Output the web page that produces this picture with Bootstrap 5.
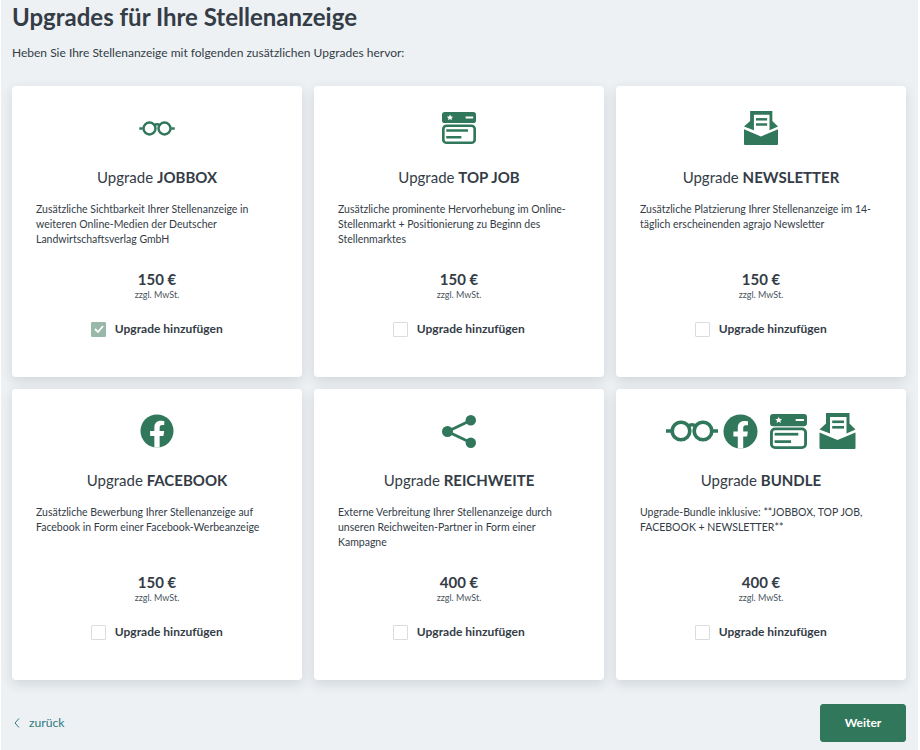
<!DOCTYPE html>
<html lang="de">
<head>
<meta charset="utf-8">
<title>Upgrades</title>
<link href="https://cdn.jsdelivr.net/npm/bootstrap@5.3.0/dist/css/bootstrap.min.css" rel="stylesheet">
<style>
html,body{height:100%;background:#fff;}
body{font-family:"Lato","Liberation Sans",sans-serif;color:#343c46;overflow:hidden;}
.stage{width:917px;height:750px;margin-left:1px;background:#edf1f4;padding:0 11px 0 11px;}
.page-title{font-size:24px;font-weight:700;line-height:30px;margin:0;padding-top:2px;color:#343c46;}
.page-sub{font-size:12px;line-height:18px;margin:0;padding-top:12px;height:54px;}
.tile-grid{display:grid;grid-template-columns:repeat(3,290px);grid-auto-rows:291px;gap:12px;}
.tile{background:#fff;border:0;border-radius:4px;box-shadow:0 4px 12px rgba(40,50,60,.14);padding:0 23px;text-align:center;display:flex;flex-direction:column;}
.icon-zone{height:64px;display:flex;align-items:center;justify-content:center;margin-top:10px;}
.icon-zone.many{gap:12px;}
.icon-zone.many .specs{margin-right:-7px;}
.tile-name{font-size:15px;font-weight:400;line-height:20px;margin:7px 0 0;height:35px;}
.tile-name b{font-weight:700;}
.tile-desc{font-size:10.5px;line-height:15px;text-align:left;margin:0 -1px 0 1px;height:68px;}
.tile-price{font-size:15px;font-weight:700;line-height:18px;margin:0;}
.tile-tax{font-size:9px;line-height:12px;margin:1px 0 20px;font-weight:400;color:#4b5560;}
.pick{display:flex;align-items:center;justify-content:center;gap:8.500px;font-size:12px;font-weight:700;line-height:16px;}
.tick{width:15px;height:15px;border:1px solid #d9dde1;border-radius:1px;background:#fff;display:flex;align-items:center;justify-content:center;}
.tick.on{background:#98b9aa;border-color:#98b9aa;}
.foot-bar{display:flex;justify-content:space-between;align-items:center;margin-top:24px;width:894px;}
.back-link{font-size:12.2px;color:#2f7a80;text-decoration:none;display:flex;align-items:center;gap:9px;padding-left:2px;}
.next-btn{background:#31775b;border-color:#31775b;color:#fff;font-size:12px;font-weight:700;width:86px;height:38px;border-radius:3px;padding:0;}
.next-btn:hover{background:#31775b;border-color:#31775b;}
svg{display:block;fill:#31775b;}
</style>
</head>
<body>
<svg width="0" height="0" style="position:absolute">
<defs>
<symbol id="i-glasses" viewBox="0 0 52 22"><g fill="none" stroke="#31775b" stroke-width="3.6"><circle cx="15" cy="11" r="8.800"/><circle cx="37" cy="11" r="8.800"/><path d="M22 6q4-2.500 8 0M0 11h5M47 11h5"/></g></symbol>
<symbol id="i-fb" viewBox="0 0 36 36"><circle cx="18" cy="18" r="17.500"/><path fill="#fff" d="M15.200 35.500V23.200h-4.500V18h4.500v-3.900c0-4.500 2.700-7 6.800-7 1.900 0 3.700.3 3.700.3v4.200h-2.100c-2.100 0-2.800 1.300-2.800 2.700V18h4.800l-.8 5.200h-4v12.300z"/></symbol>
<symbol id="i-card" viewBox="0 0 36 36" preserveAspectRatio="none"><path fill-rule="evenodd" d="M3 0h30a3 3 0 0 1 3 3v6.500a3 3 0 0 1-3 3H3a3 3 0 0 1-3-3V3a3 3 0 0 1 3-3zm5.500 2.800-1 2.300-2.400.2 1.800 1.600-.5 2.400 2.100-1.300 2.100 1.300-.5-2.400 1.800-1.600-2.400-.2zM25 5.200v2.100h8V5.200z"/><rect x="1.400" y="15.400" width="33.200" height="19.200" rx="3.500" fill="none" stroke="#31775b" stroke-width="2.800"/><rect x="4.500" y="19.400" width="23" height="2.800"/><rect x="4.500" y="27" width="16" height="2.800"/></symbol>
<symbol id="i-mail" viewBox="0 0 36 36"><path d="M6.500 0H30V10.500L36 16.500 27 20.500V4H10.500V20.500L0 16.500 6.500 10.500Z"/><path d="M0 19.400 18 27 36 19.400V35a1 1 0 0 1-1 1H1a1 1 0 0 1-1-1Z"/><rect x="12.700" y="7.500" width="11.800" height="2.600"/><rect x="12.700" y="13" width="11.800" height="2.600"/></symbol>
<symbol id="i-share" viewBox="0 0 34 33"><path fill="none" stroke="#31775b" stroke-width="3" d="M5.500 16.500 28.500 5.500M5.500 16.500l23 11"/><circle cx="5.500" cy="16.500" r="5.500"/><circle cx="28.800" cy="5.200" r="5.200"/><circle cx="28.800" cy="27.800" r="5.200"/></symbol>
</defs>
</svg>
<div class="stage">
<h1 class="page-title">Upgrades für Ihre Stellenanzeige</h1>
<p class="page-sub">Heben Sie Ihre Stellenanzeige mit folgenden zusätzlichen Upgrades hervor:</p>
<div class="tile-grid">
<div class="card tile">
<div class="icon-zone"><svg width="36" height="15"><use href="#i-glasses"/></svg></div>
<h2 class="tile-name">Upgrade <b>JOBBOX</b></h2>
<p class="tile-desc">Zusätzliche Sichtbarkeit Ihrer Stellenanzeige in weiteren Online-Medien der Deutscher Landwirtschaftsverlag GmbH</p>
<p class="tile-price">150 €</p><p class="tile-tax">zzgl. MwSt.</p>
<div class="pick"><span class="tick on"><svg width="10" height="8" viewBox="0 0 10 8"><path d="M1 4l3 3 5-6" fill="none" stroke="#fff" stroke-width="1.800"/></svg></span>Upgrade hinzufügen</div>
</div>
<div class="card tile">
<div class="icon-zone"><svg width="34" height="32"><use href="#i-card"/></svg></div>
<h2 class="tile-name">Upgrade <b>TOP JOB</b></h2>
<p class="tile-desc">Zusätzliche prominente Hervorhebung im Online-Stellenmarkt + Positionierung zu Beginn des Stellenmarktes</p>
<p class="tile-price">150 €</p><p class="tile-tax">zzgl. MwSt.</p>
<div class="pick"><span class="tick"></span>Upgrade hinzufügen</div>
</div>
<div class="card tile">
<div class="icon-zone"><svg width="34" height="34"><use href="#i-mail"/></svg></div>
<h2 class="tile-name">Upgrade <b>NEWSLETTER</b></h2>
<p class="tile-desc">Zusätzliche Platzierung Ihrer Stellenanzeige im 14-täglich erscheinenden agrajo Newsletter</p>
<p class="tile-price">150 €</p><p class="tile-tax">zzgl. MwSt.</p>
<div class="pick"><span class="tick"></span>Upgrade hinzufügen</div>
</div>
<div class="card tile">
<div class="icon-zone"><svg width="34" height="34"><use href="#i-fb"/></svg></div>
<h2 class="tile-name">Upgrade <b>FACEBOOK</b></h2>
<p class="tile-desc">Zusätzliche Bewerbung Ihrer Stellenanzeige auf Facebook in Form einer Facebook-Werbeanzeige</p>
<p class="tile-price">150 €</p><p class="tile-tax">zzgl. MwSt.</p>
<div class="pick"><span class="tick"></span>Upgrade hinzufügen</div>
</div>
<div class="card tile">
<div class="icon-zone"><svg width="34" height="33"><use href="#i-share"/></svg></div>
<h2 class="tile-name">Upgrade <b>REICHWEITE</b></h2>
<p class="tile-desc">Externe Verbreitung Ihrer Stellenanzeige durch unseren Reichweiten-Partner in Form einer Kampagne</p>
<p class="tile-price">400 €</p><p class="tile-tax">zzgl. MwSt.</p>
<div class="pick"><span class="tick"></span>Upgrade hinzufügen</div>
</div>
<div class="card tile">
<div class="icon-zone many"><svg class="specs" width="52" height="22"><use href="#i-glasses"/></svg><svg width="35" height="35"><use href="#i-fb"/></svg><svg width="37" height="35"><use href="#i-card"/></svg><svg width="37" height="36"><use href="#i-mail"/></svg></div>
<h2 class="tile-name">Upgrade <b>BUNDLE</b></h2>
<p class="tile-desc">Upgrade-Bundle inklusive: **JOBBOX, TOP JOB, FACEBOOK + NEWSLETTER**</p>
<p class="tile-price">400 €</p><p class="tile-tax">zzgl. MwSt.</p>
<div class="pick"><span class="tick"></span>Upgrade hinzufügen</div>
</div>
</div>
<div class="foot-bar">
<a class="back-link" href="#"><svg width="6" height="10" viewBox="0 0 6 10"><path d="M5 .5 1 5l4 4.500" fill="none" stroke="#2f7a80" stroke-width="1"/></svg>zurück</a>
<button type="button" class="btn next-btn">Weiter</button>
</div>
</div>
<script src="https://cdn.jsdelivr.net/npm/bootstrap@5.3.0/dist/js/bootstrap.bundle.min.js"></script>
</body>
</html>
